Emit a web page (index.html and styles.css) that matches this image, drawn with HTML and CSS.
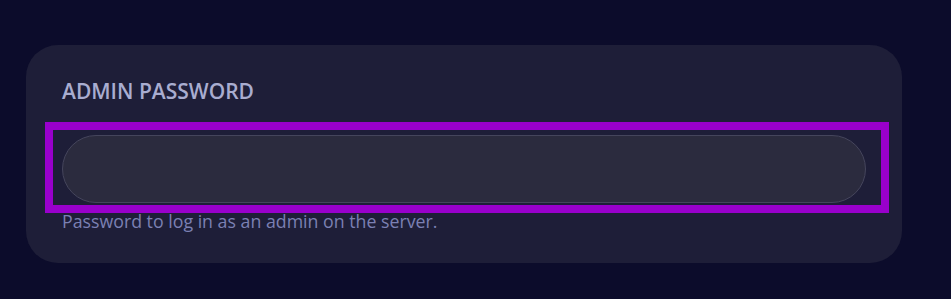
FILE: index.html
```html
<!DOCTYPE html>
<html>
<head>
<meta charset="utf-8">
<link rel="stylesheet" href="styles.css">
</head>
<body>
<div class="card">
  <label class="label" for="pw">ADMIN PASSWORD</label>
  <div class="field-wrap">
    <input class="input" id="pw" type="password">
  </div>
  <p class="help">Password to log in as an admin on the server.</p>
</div>
</body>
</html>
```
FILE: styles.css
```css
html, body {
  margin: 0;
  padding: 0;
  background: #0c0c2b;
  width: 951px;
  height: 299px;
  overflow: hidden;
}
.card {
  margin: 45px 0 0 26px;
  width: 876px;
  box-sizing: border-box;
  padding: 32px 36px 30px 36px;
  background: #1e1e38;
  border-radius: 32px;
  font-family: "Open Sans", "Noto Sans", sans-serif;
}
.label {
  display: block;
  font-size: 21px;
  line-height: 28px;
  font-weight: 600;
  color: #a9add0;
  margin-bottom: 25px;
}
.field-wrap {
  margin: 0 -15px 0 -9px;
  padding: 5px 15px 2px 9px;
  outline: 8px solid #9900cc;
}
.input {
  display: block;
  width: 100%;
  height: 68px;
  box-sizing: border-box;
  background: #2b2b3e;
  border: 1px solid #45455c;
  border-radius: 34px;
  outline: none;
  margin: 0;
}
.help {
  margin: 4px 0 0 0;
  font-size: 17.75px;
  line-height: 24px;
  color: #7b80b3;
}
```
